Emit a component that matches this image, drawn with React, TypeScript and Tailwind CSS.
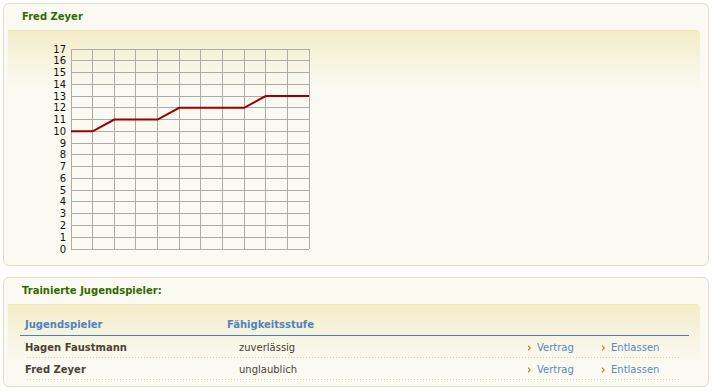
import React from "react";

const values = [10, 10, 11, 11, 11, 12, 12, 12, 12, 13, 13, 13];

function Chart() {
  // grid: 11 columns x 17 rows, drawn at page x 71..309, y 49..249
  const left = 33;
  const top = 7;
  const w = 238;
  const h = 200;
  const cols = 11;
  const rows = 17;
  const colW = w / cols;
  const rowH = h / rows;
  const points = values.map((v, i) => `${left + i * colW},${top + h - v * rowH}`).join(" ");

  return (
    <svg width="275" height="216" className="block" style={{ fontFamily: '"DejaVu Sans", sans-serif' }}>
      {Array.from({ length: cols + 1 }, (_, i) => (
        <line key={"c" + i} x1={left + i * colW} y1={top} x2={left + i * colW} y2={top + h} stroke="#acacac" strokeWidth="1" shapeRendering="crispEdges" />
      ))}
      {Array.from({ length: rows + 1 }, (_, i) => (
        <line key={"r" + i} x1={left} y1={top + i * rowH} x2={left + w} y2={top + i * rowH} stroke="#acacac" strokeWidth="1" shapeRendering="crispEdges" />
      ))}
      {Array.from({ length: rows + 1 }, (_, i) => (
        <text key={"t" + i} x={left - 5} y={top + h - i * rowH + 3.5} textAnchor="end" fontSize="10" fill="#111">
          {i}
        </text>
      ))}
      <polyline points={points} fill="none" stroke="#990000" strokeWidth="2" />
    </svg>
  );
}

function Panel({ title, children, className }: { title: string; children: React.ReactNode; className?: string }) {
  return (
    <section className={"ml-[3px] w-[706px] rounded-[6px] border border-[#e4e0c6] bg-[#fafaf2] " + (className ?? "")}>
      <h2 className="h-[26px] pl-[18px] pt-[7px] text-[10px] font-bold leading-[12px] text-[#2f6a00]">{title}</h2>
      <div className="mr-[8px] ml-[4px] rounded-tr-[4px] border-t border-[#efe8bf] bg-[linear-gradient(to_bottom,#f2ecc6_0px,#f6f2da_22px,#f9f7ea_45px,#fafaf2_60px)]">
        {children}
      </div>
    </section>
  );
}

function Arrow() {
  return (
    <svg width="4" height="6" viewBox="0 0 4 6" className="mr-[5px] inline-block">
      <path d="M0 0 L3 3 L0 6 L0 4.5 L1.5 3 L0 1.5 Z" fill="#e8670c" />
    </svg>
  );
}

const players = [
  { name: "Hagen Faustmann", level: "zuverlässig" },
  { name: "Fred Zeyer", level: "unglaublich" },
];

export default function App() {
  return (
    <div className="min-h-[391px] w-[712px] bg-white pt-[3px] font-['DejaVu_Sans',sans-serif]">
      <Panel title="Fred Zeyer" className="h-[263px]">
        <div className="pt-[11px] pl-[30px]">
          <Chart />
        </div>
      </Panel>

      <Panel title="Trainierte Jugendspieler:" className="mt-[11px] h-[110px]">
        <div className="mr-[11px] ml-[12px] pt-[14px] text-[10px] leading-[12px]">
          <div className="flex h-[17px] border-b border-[#4a80c0] font-bold text-[#4f83c2]">
            <span className="w-[207px] pl-[5px]">Jugendspieler</span>
            <span>Fähigkeitsstufe</span>
          </div>
          {players.map((p) => (
            <div key={p.name}>
              <div className="flex h-[21px] items-center pt-[2px] text-[#4a4232]">
                <span className="w-[207px] pl-[5px] font-bold">{p.name}</span>
                <span className="pl-[12px]">{p.level}</span>
                <span className="ml-auto flex items-center text-[#5a87c4]">
                  <Arrow />
                  <span className="w-[65px]">Vertrag</span>
                  <Arrow />
                  <span className="w-[78px]">Entlassen</span>
                </span>
              </div>
              <div className="mr-[8px] ml-[7px] h-px bg-[linear-gradient(to_right,#efc98e_1px,transparent_1px)] bg-[length:3px_1px]" />
            </div>
          ))}
        </div>
      </Panel>
    </div>
  );
}
